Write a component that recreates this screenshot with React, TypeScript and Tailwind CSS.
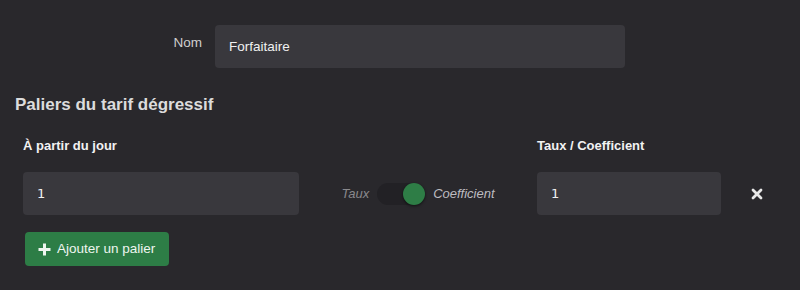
import React, { useState } from 'react'

export default function App() {
  const [nom, setNom] = useState('Forfaitaire')
  const [jour, setJour] = useState('1')
  const [taux, setTaux] = useState('1')
  const [coef, setCoef] = useState(true)

  return (
    <div className="w-[800px] h-[290px] bg-[#29282c] text-[#e6e6e6] font-['Liberation_Sans',Arial,sans-serif] overflow-hidden">
      <div className="flex pt-[25px]">
        <label className="w-[202px] text-right pt-[8px] text-[13.5px] text-[#cfcfcf]">Nom</label>
        <input
          className="ml-[13px] w-[410px] h-[43px] rounded bg-[#39383d] px-[14px] text-[13.5px] text-[#f0f0f0] outline-none"
          value={nom}
          onChange={(e) => setNom(e.target.value)}
        />
      </div>

      <h2 className="ml-[15px] mt-[24px] text-[17px] font-bold text-[#dcdcdc]">Paliers du tarif dégressif</h2>

      <div className="flex ml-[23px] mt-[18px] text-[13px] font-bold text-[#f2f2f2]">
        <div className="w-[276px]">À partir du jour</div>
        <div className="w-[238px]" />
        <div className="w-[184px]">Taux / Coefficient</div>
      </div>

      <div className="flex items-center ml-[23px] mt-[17px]">
        <input
          className="w-[276px] h-[43px] rounded bg-[#39383d] px-[14px] text-[13px] text-[#f0f0f0] outline-none font-['DejaVu_Sans',sans-serif]"
          value={jour}
          onChange={(e) => setJour(e.target.value)}
        />
        <div className="w-[238px] flex items-center justify-center gap-[8px] text-[13px] italic">
          <span className="text-[#8a898d]">Taux</span>
          <button
            onClick={() => setCoef(!coef)}
            className="relative w-[48px] h-[22px] rounded-full bg-[#222125]"
          >
            <span
              className={`absolute top-0 h-[22px] w-[22px] rounded-full bg-[#2e7d46] shadow-[0_1px_3px_rgba(0,0,0,0.6)] ${coef ? 'right-0' : 'left-0'}`}
            />
          </button>
          <span className="text-[#bdbcc0]">Coefficient</span>
        </div>
        <input
          className="w-[184px] h-[43px] rounded bg-[#39383d] px-[14px] text-[13px] text-[#f0f0f0] outline-none font-['DejaVu_Sans',sans-serif]"
          value={taux}
          onChange={(e) => setTaux(e.target.value)}
        />
        <button className="ml-[30px] text-[#e8e8e8]">
          <svg width="12" height="12" viewBox="0 0 12 12">
            <path d="M2 2 L10 10 M10 2 L2 10" stroke="currentColor" strokeWidth="2.8" strokeLinecap="round" />
          </svg>
        </button>
      </div>

      <button className="ml-[25px] mt-[17px] h-[34px] w-[144px] pl-[13px] flex items-center gap-[6px] rounded bg-[#2d7d46] text-[13.5px] text-[#eef5ef]">
        <svg width="13" height="13" viewBox="0 0 13 13">
          <path d="M6.5 0.5 V12.5 M0.5 6.5 H12.5" stroke="currentColor" strokeWidth="3" />
        </svg>
        Ajouter un palier
      </button>
    </div>
  )
}
